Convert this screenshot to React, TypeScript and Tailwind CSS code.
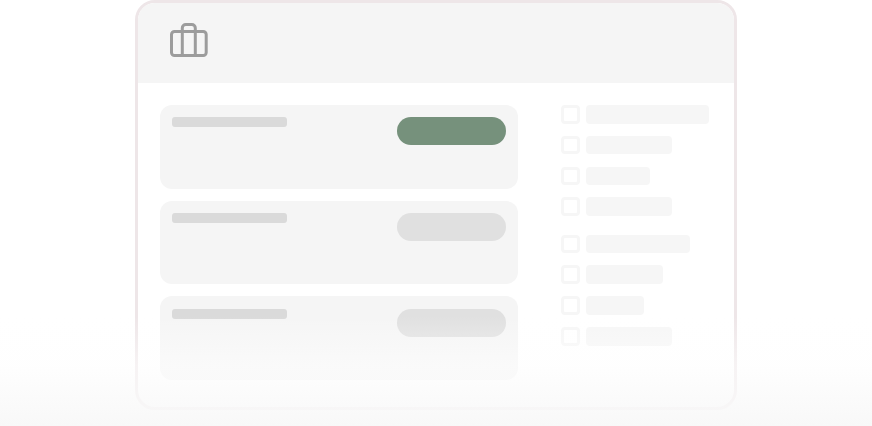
const cards = ["bg-[#76917c]", "bg-[#e0e0e0]", "bg-[#e0e0e0]"];
const groupOne = ["w-[123.5px]", "w-[86px]", "w-[64.5px]", "w-[86px]"];
const groupTwo = ["w-[104.5px]", "w-[77px]", "w-[58.5px]", "w-[86px]"];

function Row({ width }: { width: string }) {
  return (
    <div className="flex items-center gap-[6px]">
      <div className="h-[18.5px] w-[18.5px] rounded-[4px] border-[3px] border-[#f6f6f6] bg-white" />
      <div className={`h-[18.5px] rounded-[4px] bg-[#f6f6f6] ${width}`} />
    </div>
  );
}

export default function App() {
  return (
    <div className="relative h-[426px] w-[872px] overflow-hidden bg-white">
      <div className="ml-[135px] h-[410px] w-[602px] overflow-hidden rounded-[20px] border-[3px] border-[#eee6e8] bg-white">
        <div className="flex h-[80px] items-center bg-[#f5f5f5] pb-[6px] pl-[32px]">
          <svg width="38" height="34" viewBox="0 0 38 34" fill="none" stroke="#9c9c9c" strokeWidth="3">
            <rect x="1.5" y="8.5" width="34.7" height="24" rx="3" />
            <path d="M12.3 32.5V5a3.5 3.5 0 0 1 3.5-3.5h6a3.5 3.5 0 0 1 3.5 3.5v27.5" />
          </svg>
        </div>
        <div className="flex pl-[22px] pt-[22px]">
          <div className="flex w-[358px] flex-col gap-[12.2px]">
            {cards.map((color, i) => (
              <div key={i} className="flex h-[83.5px] items-start justify-between rounded-[12px] bg-[#f5f5f5] pl-[12px] pr-[12.5px] pt-[12.2px]">
                <div className="h-[10px] w-[114.5px] rounded-[3px] bg-[#dadada]" />
                <div className={`h-[28px] w-[108.5px] rounded-full ${color}`} />
              </div>
            ))}
          </div>
          <div className="ml-[43px] flex flex-col gap-[18.6px]">
            <div className="flex flex-col gap-[12.33px]">
              {groupOne.map((w, i) => (
                <Row key={i} width={w} />
              ))}
            </div>
            <div className="flex flex-col gap-[12.33px]">
              {groupTwo.map((w, i) => (
                <Row key={i} width={w} />
              ))}
            </div>
          </div>
        </div>
      </div>
      {/* fade over the bottom of the card */}
      <div className="absolute inset-x-0 bottom-0 h-[110px] bg-[linear-gradient(to_bottom,#ffffff00_0%,#fefefe88_45%,#f8f8f8_100%)]" />
    </div>
  );
}
